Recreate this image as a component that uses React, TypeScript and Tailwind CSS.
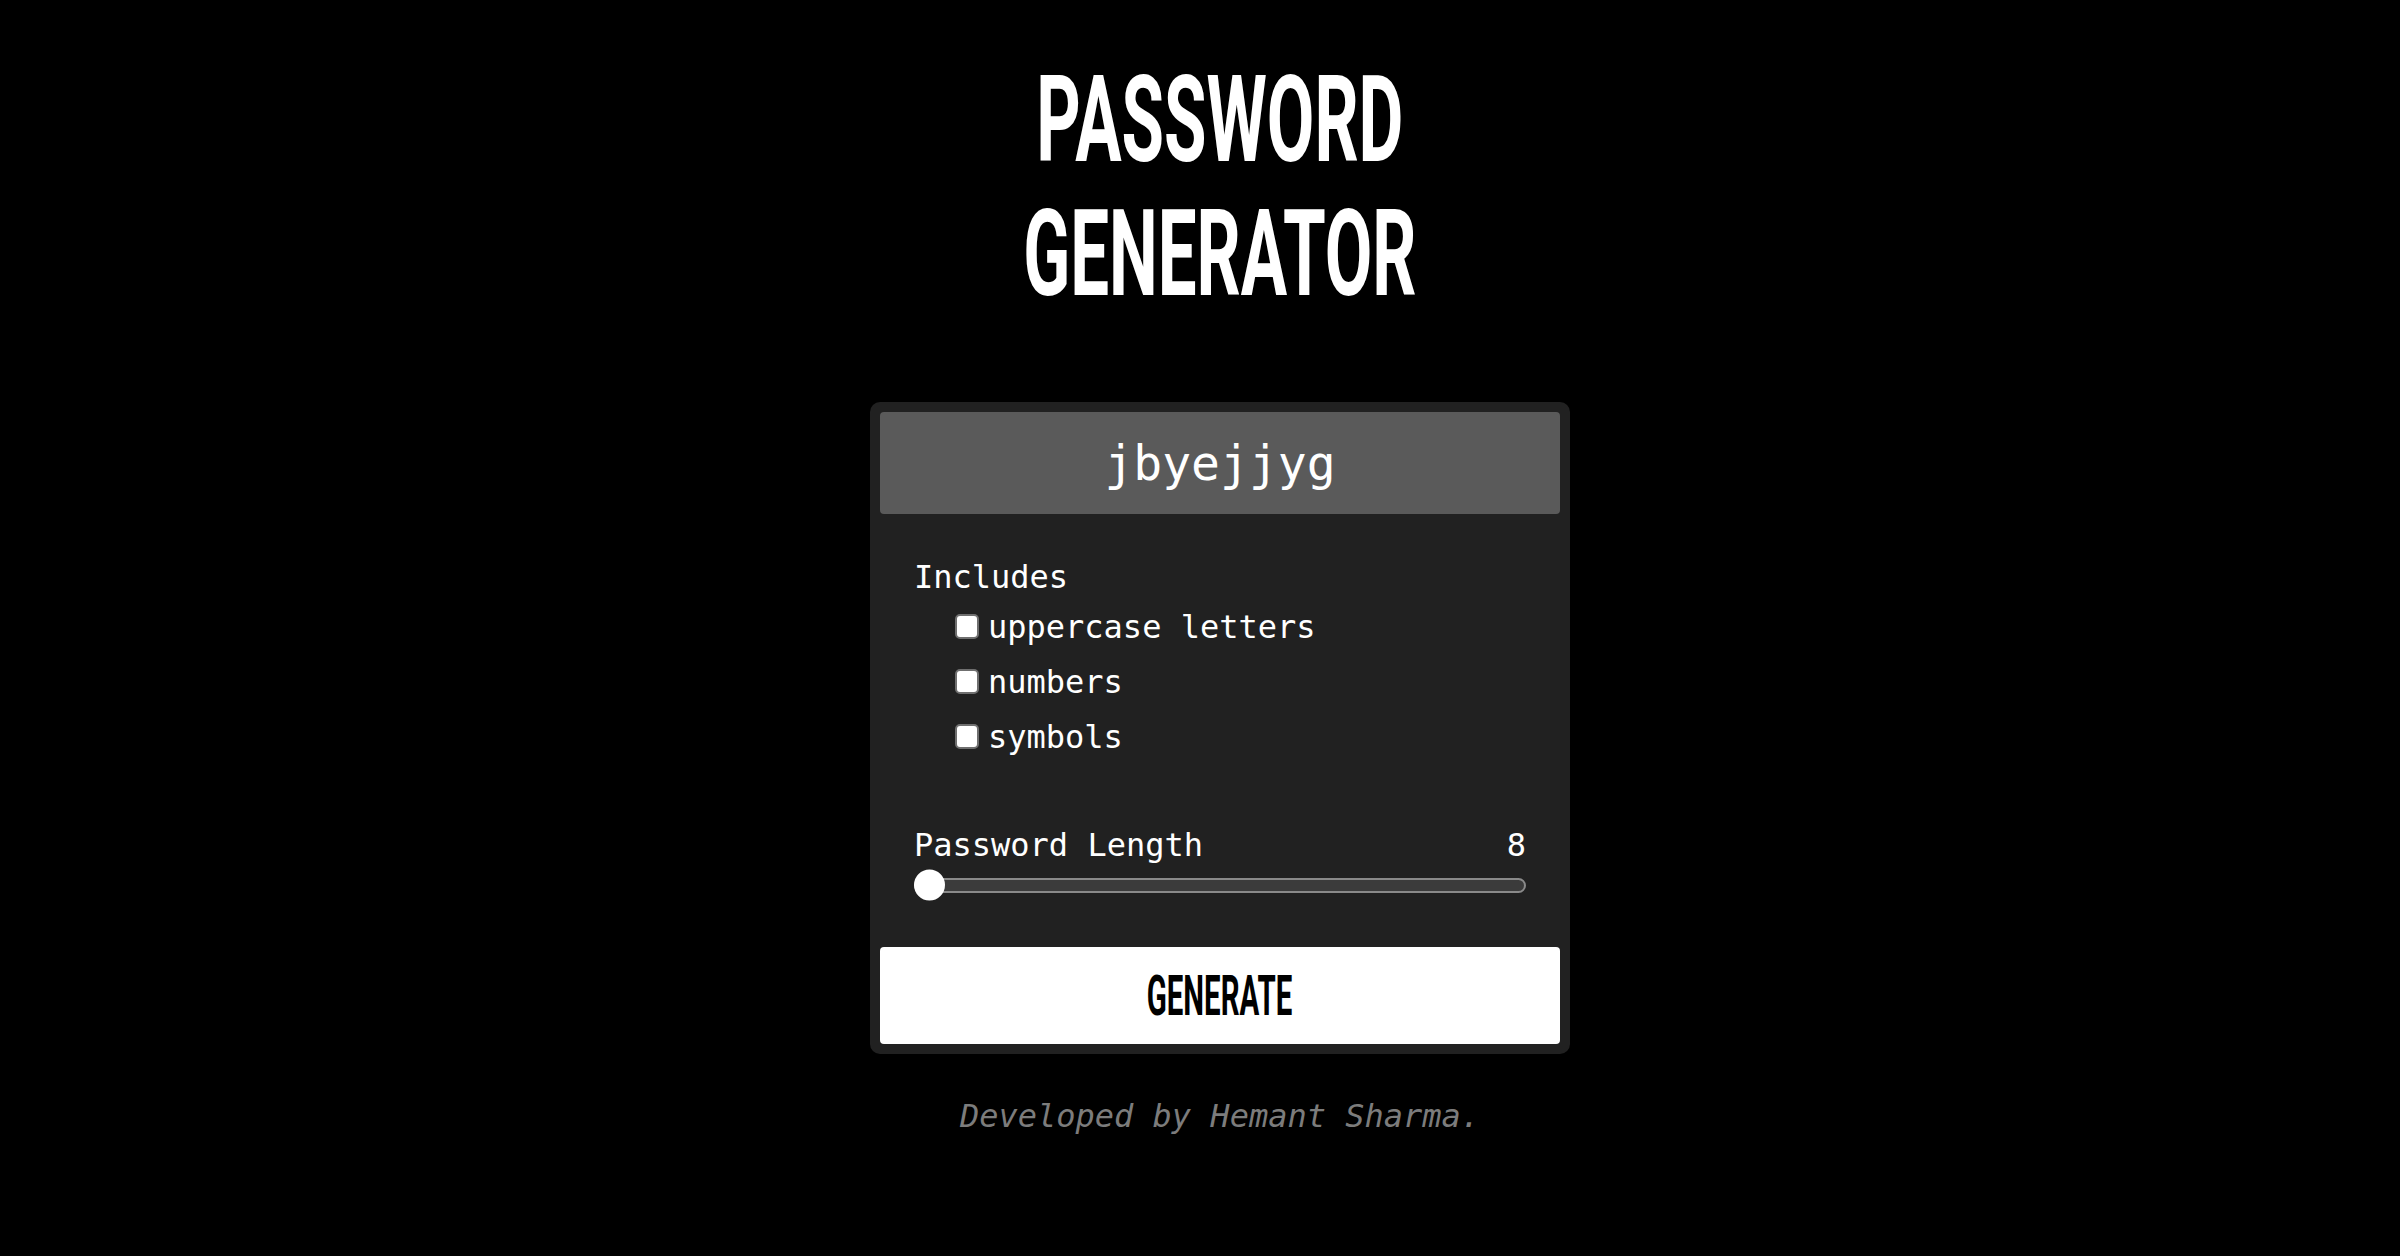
import React, { useState } from "react";

const mono = "font-['DejaVu_Sans_Mono','Liberation_Mono',monospace]";
const display = "font-['Liberation_Sans_Narrow','Arial_Narrow','Roboto',sans-serif]";

const App = () => {
  const [password] = useState("jbyejjyg");
  const [length] = useState(8);
  const [opts, setOpts] = useState({ upper: false, numbers: false, symbols: false });

  const options: { key: "upper" | "numbers" | "symbols"; label: string }[] = [
    { key: "upper", label: "uppercase letters" },
    { key: "numbers", label: "numbers" },
    { key: "symbols", label: "symbols" },
  ];

  return (
    <div className="min-h-screen bg-black flex flex-col items-center pt-[53px] pl-[40px]">
      <h1 className={`${display} text-white font-bold text-[121px] leading-[134px] text-center scale-x-[0.57]`}>
        PASSWORD
        <br />
        GENERATOR
      </h1>

      <div className="mt-[81px] w-[700px] bg-[#212121] rounded-[10px] p-[10px]">
        <div className={`${mono} h-[102px] bg-[#5a5a5a] rounded-[4px] flex items-center justify-center text-white text-[48px]`}>
          {password}
        </div>

        <div className={`${mono} px-[34px] text-white text-[32px]`}>
          <p className="mt-[41px] leading-[44px]">Includes</p>
          <div className="pl-[41px]">
            {options.map((o) => (
              <label key={o.key} className="flex items-center h-[55px] gap-[9px]">
                <input
                  type="checkbox"
                  checked={opts[o.key]}
                  onChange={() => setOpts({ ...opts, [o.key]: !opts[o.key] })}
                  className="appearance-none w-[24px] h-[25px] bg-white border-2 border-[#6f6f6f] rounded-[5px]"
                />
                <span className="leading-[44px]">{o.label}</span>
              </label>
            ))}
          </div>

          <div className="mt-[57px] flex justify-between leading-[48px]">
            <span>Password Length</span>
            <span>{length}</span>
          </div>
          <div className="relative h-[32px] flex items-center">
            <div className="w-full h-[15px] rounded-full border-2 border-[#8a8a8a] bg-[#3b3b3b]" />
            <div className="absolute left-0 top-1/2 -translate-y-1/2 w-[31px] h-[31px] rounded-full bg-white" />
          </div>
        </div>

        <button className="mt-[46px] w-full h-[97px] bg-white rounded-[4px] flex items-center justify-center">
          <span className={`${display} inline-block text-black font-bold text-[56px] scale-x-[0.525]`}>GENERATE</span>
        </button>
      </div>

      <p className={`${mono} mt-[38px] leading-[48px] text-[32px] italic text-[#7c7c7c]`}>
        Developed by Hemant Sharma.
      </p>
    </div>
  );
};

export default App;
